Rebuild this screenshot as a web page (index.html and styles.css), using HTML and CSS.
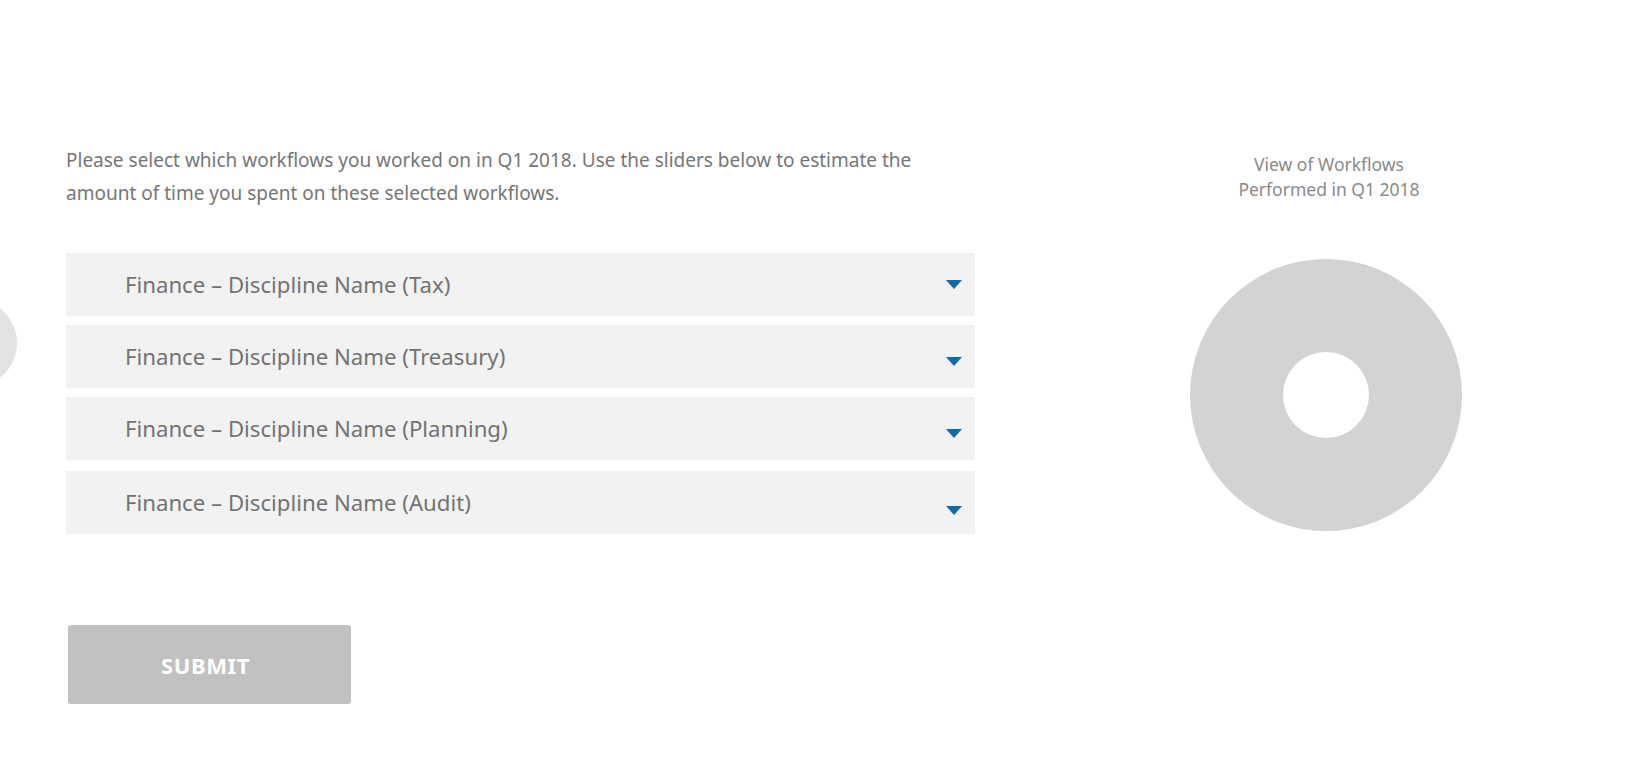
FILE: index.html
```html
<!DOCTYPE html>
<html lang="en">
<head>
<meta charset="utf-8">
<title>Workflows</title>
<link rel="stylesheet" href="styles.css">
</head>
<body>
<div class="peek"></div>
<main class="page">
  <section class="form-col">
    <p class="intro">Please select which workflows you worked on in Q1 2018. Use the sliders below to estimate the amount of time you spent on these selected workflows.</p>
    <div class="list">
      <div class="row row--first"><span class="row-label">Finance – Discipline Name (Tax)</span><span class="caret"></span></div>
      <div class="row"><span class="row-label">Finance – Discipline Name (Treasury)</span><span class="caret"></span></div>
      <div class="row"><span class="row-label">Finance – Discipline Name (Planning)</span><span class="caret"></span></div>
      <div class="row row--last"><span class="row-label">Finance – Discipline Name (Audit)</span><span class="caret caret--low"></span></div>
    </div>
    <button class="submit" type="button">SUBMIT</button>
  </section>
  <aside class="chart-col">
    <h2 class="chart-title">View of Workflows<br>Performed in Q1 2018</h2>
    <div class="donut"><div class="donut-hole"></div></div>
  </aside>
</main>
</body>
</html>
```
FILE: styles.css
```css
* { box-sizing: border-box; }
html, body { margin: 0; padding: 0; background: #fff; }
body {
  font-family: "Noto Sans", "Open Sans", sans-serif;
  color: #767676;
  width: 1647px;
  height: 784px;
  overflow: hidden;
  position: relative;
}
.peek {
  position: absolute;
  left: -75px;
  top: 298px;
  width: 92px;
  height: 90px;
  border-radius: 50%;
  background: #e3e3e3;
}
.page {
  display: flex;
  align-items: flex-start;
  padding-top: 144px;
  padding-left: 66px;
}
.form-col {
  width: 909px;
  display: flex;
  flex-direction: column;
}
.intro {
  margin: 0;
  font-size: 19px;
  line-height: 33px;
  color: #767676;
  width: 870px;
}
.list {
  margin-top: 43px;
  display: flex;
  flex-direction: column;
}
.row {
  height: 63px;
  background: #f2f2f2;
  display: flex;
  align-items: center;
  padding-left: 59px;
  padding-right: 13px;
  margin-bottom: 9px;
}
.row--last { margin-top: 2px; margin-bottom: 0; }
.row-label {
  flex: 1;
  font-size: 22.2px;
  color: #737373;
}
.caret {
  width: 0;
  height: 0;
  border-left: 8px solid transparent;
  border-right: 8px solid transparent;
  border-top: 9px solid #0f6aa9;
  margin-top: 9px;
}
.row--first .caret { margin-top: 0; }
.caret--low { margin-top: 15px; }
.submit {
  margin-top: 91px;
  margin-left: 2px;
  width: 283px;
  height: 79px;
  border: none;
  border-radius: 3px;
  background: #c1c1c1;
  color: #fff;
  font-family: "Noto Sans", "Open Sans", sans-serif;
  font-weight: 700;
  font-size: 22px;
  padding: 0 8px 0 0;
  letter-spacing: 0.6px;
}
.chart-col {
  margin-left: 152px;
  width: 400px;
  display: flex;
  flex-direction: column;
  align-items: center;
  padding-top: 8px;
}
.chart-title {
  margin: 0;
  font-weight: 400;
  font-size: 17.5px;
  line-height: 25px;
  text-align: center;
  color: #8a8a8a;
  padding-left: 4px;
}
.donut {
  margin-top: 57px;
  width: 272px;
  height: 272px;
  border-radius: 50%;
  background: #d3d3d3;
  display: flex;
  align-items: center;
  justify-content: center;
  margin-left: -2px;
}
.donut-hole {
  width: 86px;
  height: 86px;
  border-radius: 50%;
  background: #fff;
}
```
